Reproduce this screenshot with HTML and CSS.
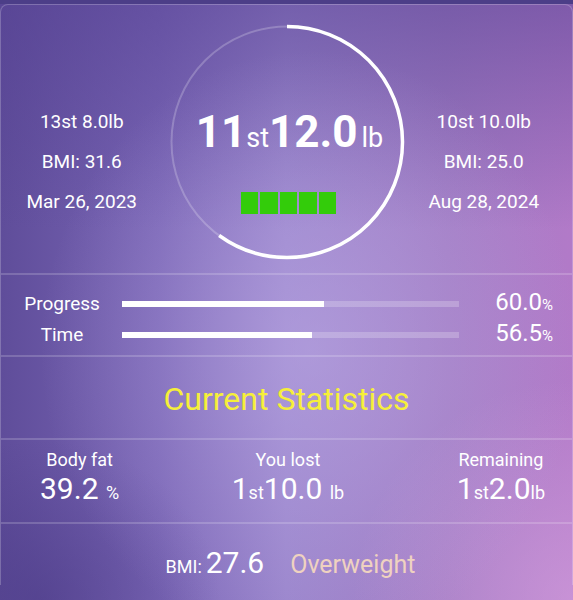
FILE: index.html
```
<!DOCTYPE html>
<html lang="en">
<head>
    <meta charset="UTF-8">
    <meta name="viewport" content="width=device-width, initial-scale=1.0">
    <title>Weight Progress</title>
    <link rel="stylesheet" href="styles.css">
</head>
<body>

<div class="top-strip"></div>

<div class="card">
    <!-- Start / current / goal -->
    <section class="overview">
        <div class="side side-start">
            <p>13st 8.0lb</p>
            <p>BMI: 31.6</p>
            <p>Mar 26, 2023</p>
        </div>

        <div class="dial">
            <svg class="ring" width="236" height="236" viewBox="0 0 236 236">
                <circle cx="118" cy="118" r="115.5" fill="none" stroke="rgba(255,255,255,0.22)" stroke-width="2"/>
                <circle cx="118" cy="118" r="115.5" fill="none" stroke="#fff" stroke-width="3.5"
                        pathLength="100" stroke-dasharray="60 100" transform="rotate(-90 118 118)"/>
            </svg>
            <div class="weight">
                <span class="big">11</span><span class="unit">st</span><span class="big">12.0</span> <span class="unit">lb</span>
            </div>
            <div class="blocks">
                <span></span><span></span><span></span><span></span><span></span>
            </div>
        </div>

        <div class="side side-goal">
            <p>10st 10.0lb</p>
            <p>BMI: 25.0</p>
            <p>Aug 28, 2024</p>
        </div>
    </section>

    <!-- Progress bars -->
    <section class="bars">
        <div class="bar-label">Progress</div>
        <div class="track"><div class="fill" style="width: 60%"></div></div>
        <div class="bar-value">60.0<small>%</small></div>

        <div class="bar-label">Time</div>
        <div class="track"><div class="fill" style="width: 56.5%"></div></div>
        <div class="bar-value">56.5<small>%</small></div>
    </section>

    <section class="heading">
        <h2>Current Statistics</h2>
    </section>

    <section class="stats">
        <div class="stat">
            <div class="stat-label">Body fat</div>
            <div class="stat-value">39.2 <small>%</small></div>
        </div>
        <div class="stat">
            <div class="stat-label">You lost</div>
            <div class="stat-value">1<small>st</small>10.0 <small>lb</small></div>
        </div>
        <div class="stat">
            <div class="stat-label">Remaining</div>
            <div class="stat-value">1<small>st</small>2.0<small>lb</small></div>
        </div>
    </section>

    <section class="bmi">
        <span class="bmi-label">BMI:</span>
        <span class="bmi-value">27.6</span>
        <span class="bmi-status">Overweight</span>
    </section>
</div>

</body>
</html>
```

FILE: styles.css
```
body {
    margin: 0;
    padding: 0;
    width: 573px;
    height: 600px;
    overflow: hidden;
    font-family: Roboto, "Noto Sans", sans-serif;
    color: #fff;
    background-color: #7a64b4;
    background-image:
        radial-gradient(ellipse 270px 300px at 310px 350px, rgba(192, 174, 232, 0.5), rgba(192, 174, 232, 0)),
        radial-gradient(ellipse 220px 220px at 573px 600px, rgba(222, 170, 228, 0.5), rgba(222, 170, 228, 0)),
        radial-gradient(ellipse 180px 160px at 40px 600px, rgba(70, 54, 130, 0.5), rgba(70, 54, 130, 0)),
        linear-gradient(180deg, rgba(84, 64, 146, 0.55) 0, rgba(84, 64, 146, 0) 230px),
        linear-gradient(90deg, #5f4d9a 0%, #7a66b6 28%, #9a85cc 50%, #a27cc4 78%, #b27ac8 100%);
}
p {
    margin: 0;
}
.top-strip {
    height: 4px;
    background-color: #4c3e88;
}
.card {
    border: 1px solid rgba(255, 255, 255, 0.22);
    border-bottom: none;
    border-radius: 8px 8px 0 0;
}
section {
    border-bottom: 2px solid rgba(255, 255, 255, 0.18);
}
section:last-child {
    border-bottom: none;
}

/* overview */
.overview {
    display: grid;
    grid-template-columns: 1fr 236px 1fr;
    align-items: center;
    height: 270px;
    padding-top: 19px;
    box-sizing: border-box;
}
.side {
    text-align: center;
    font-size: 19px;
    line-height: 40px;
    padding-top: 26px;
}
.side-start {
    padding-right: 6px;
}
.side-goal {
    padding-right: 9px;
}
.dial {
    position: relative;
    width: 236px;
    height: 236px;
    display: flex;
    flex-direction: column;
    align-items: center;
    justify-content: center;
    padding-top: 40px;
    box-sizing: border-box;
    align-self: start;
}
.ring {
    position: absolute;
    top: 0;
    left: 0;
}
.weight {
    line-height: 44px;
    white-space: nowrap;
    margin-left: 6px;
}
.weight .big {
    font-size: 44px;
    font-weight: bold;
}
.weight .unit {
    font-size: 27px;
}
.blocks {
    display: flex;
    gap: 2px;
    margin-top: 28px;
    margin-left: 4px;
}
.blocks span {
    width: 17.6px;
    height: 22px;
    background-color: #33cc0a;
}

/* progress bars */
.bars {
    display: grid;
    grid-template-columns: 90px 337px 1fr;
    column-gap: 15px;
    align-items: center;
    padding: 13px 19px 13px 16px;
    height: 82px;
    box-sizing: border-box;
}
.bar-label {
    text-align: center;
    font-size: 19px;
    line-height: 28px;
}
.track {
    height: 6px;
    background-color: rgba(255, 255, 255, 0.22);
}
.fill {
    height: 100%;
    background-color: #fff;
}
.bar-value {
    text-align: right;
    font-size: 24px;
    line-height: 28px;
}
.bar-value small {
    font-size: 15px;
}

/* heading */
.heading {
    height: 83px;
    display: flex;
    align-items: center;
    justify-content: center;
    padding-top: 2px;
    box-sizing: border-box;
}
.heading h2 {
    margin: 0;
    font-size: 32px;
    font-weight: normal;
    color: #f6ef3a;
}

/* current stats */
.stats {
    display: flex;
    justify-content: space-between;
    padding: 8px 27px 0 39px;
    height: 84px;
    box-sizing: border-box;
}
.stat {
    text-align: center;
}
.stat-label {
    font-size: 18px;
    line-height: 24px;
}
.stat-value {
    font-size: 30px;
    line-height: 34px;
}
.stat-value small {
    font-size: 18px;
}

/* bmi */
.bmi {
    text-align: center;
    padding-top: 22px;
    padding-left: 8px;
    line-height: 34px;
}
.bmi-label {
    font-size: 18px;
}
.bmi-value {
    font-size: 30px;
}
.bmi-status {
    font-size: 25px;
    color: #efd2c0;
    margin-left: 22px;
}
```
